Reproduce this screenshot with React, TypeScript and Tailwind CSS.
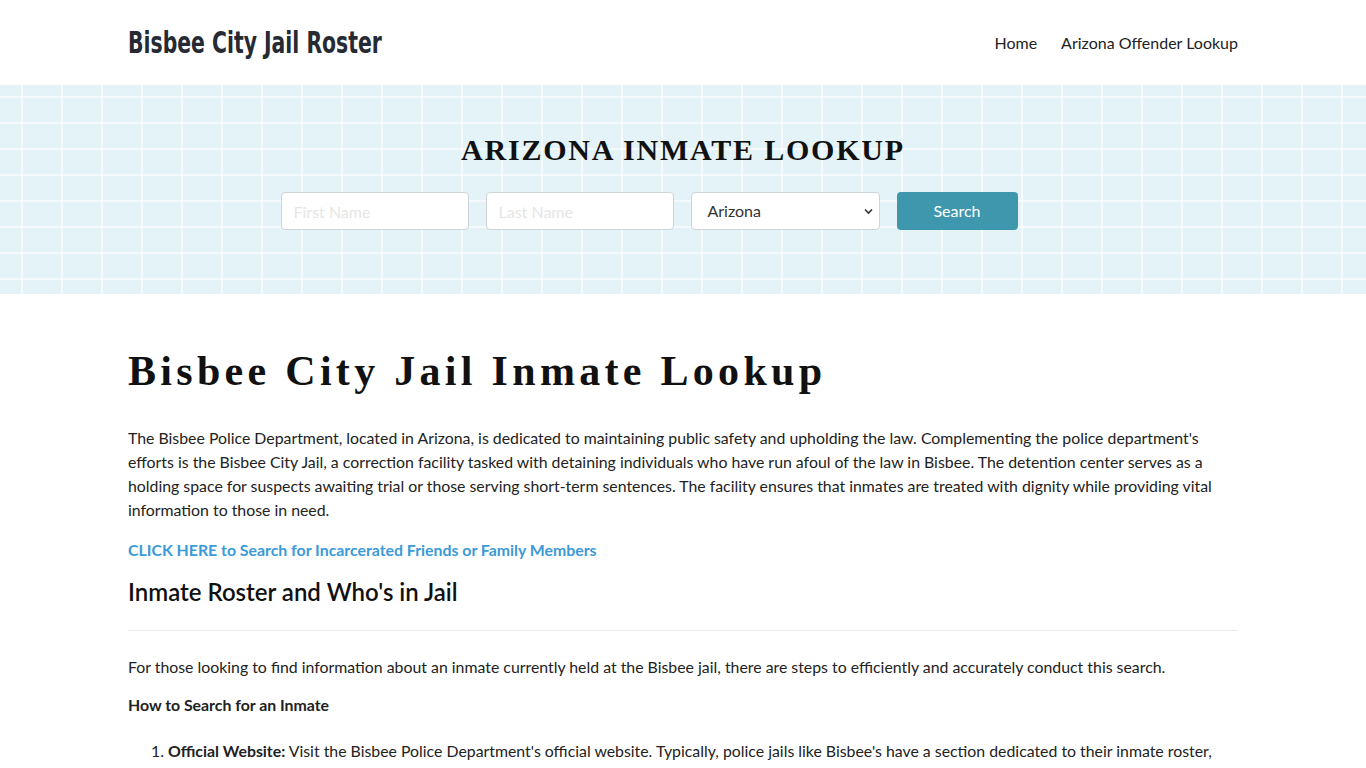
import React from "react";

export default function App() {
  return (
    <div className="min-h-screen bg-white text-[#222] font-['Lato','Noto_Sans',sans-serif]">
      <header className="bg-white">
        <div className="mx-auto flex h-[85px] w-[1110px] items-center justify-between">
          <a className="block text-[30px] font-bold text-[#252a33] font-['DejaVu_Sans_Condensed','Liberation_Sans',sans-serif] scale-x-[0.755] origin-left leading-none whitespace-nowrap">
            Bisbee City Jail Roster
          </a>
          <nav className="flex items-center gap-6 text-[16px] text-[#222]">
            <a>Home</a>
            <a>Arizona Offender Lookup</a>
          </nav>
        </div>
      </header>

      <section className="h-[209px] bg-[#e3f3f7] bg-[linear-gradient(to_right,rgba(255,255,255,0.6)_2px,transparent_2px),linear-gradient(to_bottom,rgba(255,255,255,0.6)_2px,transparent_2px)] bg-[size:40px_26px] bg-[position:21px_11px]">
        <div className="flex flex-col items-center pt-[50px]">
          <h2 className="text-[30px] font-bold leading-none tracking-[1.8px] text-[#111] font-['Liberation_Serif',serif]">
            ARIZONA INMATE LOOKUP
          </h2>
          <form className="mt-[27px] mr-[68px] flex items-center gap-[17px]">
            <input
              placeholder="First Name"
              className="h-[38px] w-[188px] rounded-[4px] border border-[#ced4da] bg-white px-3 text-[16px] placeholder:text-[#e6e6e6] outline-none"
            />
            <input
              placeholder="Last Name"
              className="h-[38px] w-[188px] rounded-[4px] border border-[#ced4da] bg-white px-3 text-[16px] placeholder:text-[#e6e6e6] outline-none"
            />
            <div className="relative h-[38px] w-[189px] rounded-[4px] border border-[#ced4da] bg-white">
              <span className="absolute left-[16px] top-[8px] text-[16px] leading-[20px] text-[#333]">Arizona</span>
              <svg className="absolute right-[6px] top-[15px]" width="9" height="7" viewBox="0 0 9 7">
                <path d="M1 1.5 L4.5 5 L8 1.5" fill="none" stroke="#333" strokeWidth="1.6" />
              </svg>
            </div>
            <button
              type="button"
              className="h-[38px] w-[121px] rounded-[4px] bg-[#3f97ae] text-[16px] text-white"
            >
              Search
            </button>
          </form>
        </div>
      </section>

      <main className="mx-auto w-[1110px] pt-[52px]">
        <h1 className="text-[42px] font-bold leading-[1.2] tracking-[4.3px] text-[#111] font-['Liberation_Serif',serif] whitespace-nowrap">
          Bisbee City Jail Inmate Lookup
        </h1>
        <p className="mt-[30px] text-[15.85px] leading-[24px] text-[#222]">
          The Bisbee Police Department, located in Arizona, is dedicated to maintaining public safety and upholding the law. Complementing the police department's efforts is the Bisbee City Jail, a correction facility tasked with detaining individuals who have run afoul of the law in Bisbee. The detention center serves as a holding space for suspects awaiting trial or those serving short-term sentences. The facility ensures that inmates are treated with dignity while providing vital information to those in need.
        </p>
        <p className="mt-[16px] text-[15.85px] leading-[24px] font-bold text-[#3b9ad8]">
          <a>CLICK HERE to Search for Incarcerated Friends or Family Members</a>
        </p>
        <h2 className="mt-[16px] text-[24px] font-semibold leading-[1.2] text-[#111]">
          Inmate Roster and Who's in Jail
        </h2>
        <hr className="mt-[23px] border-t border-[#e9ecef]" />
        <p className="mt-[24px] text-[15.85px] leading-[24px] text-[#222]">
          For those looking to find information about an inmate currently held at the Bisbee jail, there are steps to efficiently and accurately conduct this search.
        </p>
        <p className="mt-[14px] text-[15.85px] leading-[24px] font-bold text-[#222]">
          How to Search for an Inmate
        </p>
        <ol className="mt-[22px] list-decimal pl-[40px] text-[15.85px] leading-[24px] text-[#222]">
          <li>
            <b>Official Website:</b> Visit the Bisbee Police Department's official website. Typically, police jails like Bisbee's have a section dedicated to their inmate roster, allowing the public to view the list of individuals currently in custody.
          </li>
        </ol>
      </main>
    </div>
  );
}
